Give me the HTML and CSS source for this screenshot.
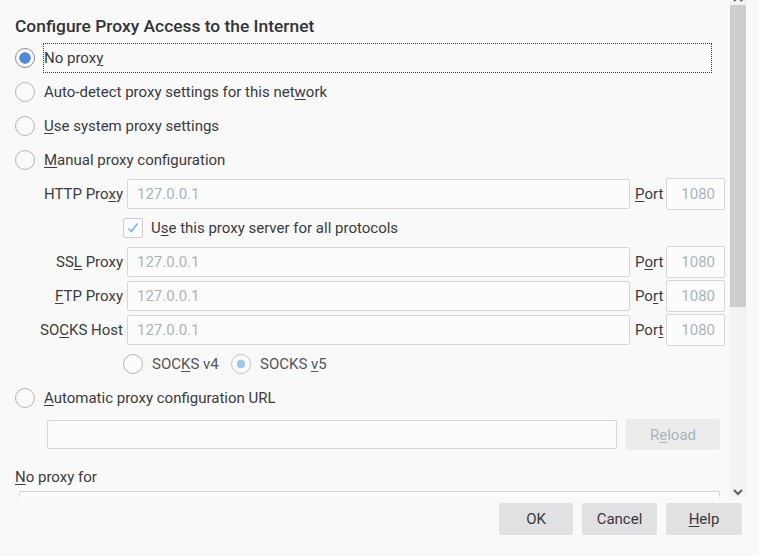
FILE: index.html
```html
<!DOCTYPE html>
<html lang="en">
<head>
    <meta charset="UTF-8">
    <meta name="viewport" content="width=device-width, initial-scale=1.0">
    <title>Connection Settings</title>
    <link rel="stylesheet" href="styles.css">
</head>
<body>
    <div class="dialog">
        <div class="scroll-area">
            <div class="content">
                <h1 class="title">Configure Proxy Access to the Internet</h1>

                <label class="option">
                    <input type="radio" name="mode" class="radio" checked>
                    <span class="option-text focused">No prox<u>y</u></span>
                </label>
                <label class="option">
                    <input type="radio" name="mode" class="radio">
                    <span class="option-text">Auto-detect proxy settings for this net<u>w</u>ork</span>
                </label>
                <label class="option">
                    <input type="radio" name="mode" class="radio">
                    <span class="option-text"><u>U</u>se system proxy settings</span>
                </label>
                <label class="option">
                    <input type="radio" name="mode" class="radio">
                    <span class="option-text"><u>M</u>anual proxy configuration</span>
                </label>

                <div class="proxy-grid">
                    <label class="field-label">HTTP Pro<u>x</u>y</label>
                    <input class="text-input" value="127.0.0.1" readonly>
                    <label class="port-label"><u>P</u>ort</label>
                    <input class="port-input" value="1080" readonly>

                    <label class="share-row">
                        <span class="checkbox">
                            <svg width="18" height="18" viewBox="0 0 18 18"><path d="M4.5 9.5 L7.5 12.5 L13.5 4.5" fill="none" stroke="#7db0e8" stroke-width="1.6"/></svg>
                        </span>
                        <span>U<u>s</u>e this proxy server for all protocols</span>
                    </label>

                    <label class="field-label">SS<u>L</u> Proxy</label>
                    <input class="text-input" value="127.0.0.1" readonly>
                    <label class="port-label">P<u>o</u>rt</label>
                    <input class="port-input" value="1080" readonly>

                    <label class="field-label"><u>F</u>TP Proxy</label>
                    <input class="text-input" value="127.0.0.1" readonly>
                    <label class="port-label">Po<u>r</u>t</label>
                    <input class="port-input" value="1080" readonly>

                    <label class="field-label">SO<u>C</u>KS Host</label>
                    <input class="text-input" value="127.0.0.1" readonly>
                    <label class="port-label">Por<u>t</u></label>
                    <input class="port-input" value="1080" readonly>
                </div>

                <div class="socks-versions">
                    <label class="socks-option v4">
                        <input type="radio" name="socks" class="radio">
                        <span>SOC<u>K</u>S v4</span>
                    </label>
                    <label class="socks-option">
                        <input type="radio" name="socks" class="radio dimmed" checked>
                        <span>SOCKS <u>v</u>5</span>
                    </label>
                </div>

                <label class="option">
                    <input type="radio" name="mode" class="radio">
                    <span class="option-text"><u>A</u>utomatic proxy configuration URL</span>
                </label>

                <div class="url-row">
                    <input class="url-input" readonly>
                    <button class="reload" disabled>R<u>e</u>load</button>
                </div>

                <label class="no-proxy-label"><u>N</u>o proxy for</label>
                <textarea class="no-proxy-list"></textarea>
            </div>

            <div class="scrollbar">
                <svg class="arrow up" width="16" height="10" viewBox="0 0 16 10"><path d="M4 6 L8 2 L12 6" fill="none" stroke="#5b5b66" stroke-width="2"/></svg>
                <div class="thumb"></div>
                <div class="track-rest"></div>
                <svg class="arrow" width="16" height="10" viewBox="0 0 16 10"><path d="M4 3 L8 7 L12 3" fill="none" stroke="#5b5b66" stroke-width="2"/></svg>
            </div>
        </div>

        <div class="footer">
            <button class="btn ok">OK</button>
            <button class="btn cancel">Cancel</button>
            <button class="btn help"><u>H</u>elp</button>
        </div>
    </div>
</body>
</html>
```

FILE: styles.css
```css
* {
    box-sizing: border-box;
    margin: 0;
    padding: 0;
}
body {
    font-family: Roboto, "Noto Sans", sans-serif;
    font-size: 15px;
    color: #3b3b40;
    background: #f9f9f9;
}
u {
    text-decoration-thickness: 1px;
    text-underline-offset: 2px;
}
.dialog {
    width: 759px;
    height: 556px;
    display: flex;
    flex-direction: column;
}
.scroll-area {
    height: 497px;
    display: flex;
    overflow: hidden;
}
.content {
    width: 730px;
    padding-left: 15px;
}
.title {
    font-size: 17.4px;
    font-weight: 500;
    line-height: 24px;
    padding-top: 14px;
    margin-bottom: 3px;
    color: #333337;
}

/* radio buttons */
.radio {
    appearance: none;
    width: 20px;
    height: 20px;
    border: 1px solid #b4b4b8;
    border-radius: 50%;
    background: #fbfbfb;
    flex-shrink: 0;
}
.radio:checked {
    border-color: #8f8f94;
    background: radial-gradient(circle, #4d8bd6 0 5.4px, #fbfbfb 6px);
}
.radio.dimmed:checked {
    border-color: #c4c4c8;
    background: radial-gradient(circle, #9fc6f0 0 4px, #fbfbfb 4.6px);
}
.option {
    height: 34px;
    display: flex;
    align-items: center;
    gap: 8px;
}
.option-text {
    flex: 1;
    margin-right: 18px;
    height: 30px;
    line-height: 28px;
    border: 1px dotted transparent;
}
.option-text.focused {
    border-color: #3b3b3b;
}

/* manual proxy fields */
.proxy-grid {
    display: grid;
    grid-template-columns: 83px 503px 28px 59px;
    grid-auto-rows: 34px;
    column-gap: 4px;
    align-items: center;
    padding-left: 25px;
}
.field-label {
    text-align: right;
    white-space: nowrap;
}
.port-label {
    padding-left: 1px;
}
.text-input,
.port-input,
.url-input {
    font: inherit;
    height: 30px;
    border: 1px solid #d6d6d9;
    border-radius: 2px;
    background: #fcfcfc;
    color: #a8b5bc;
    padding: 0 9px;
    outline: none;
}
.text-input {
    width: 503px;
}
.port-input {
    width: 59px;
    height: 32px;
    text-align: right;
}
.share-row {
    grid-column: 1 / -1;
    padding-left: 83px;
    display: flex;
    align-items: center;
    gap: 8px;
}
.checkbox {
    width: 20px;
    height: 20px;
    border: 1px solid #cfcfd2;
    border-radius: 2px;
    background: #fbfbfb;
    display: flex;
    align-items: center;
    justify-content: center;
}
.socks-versions {
    height: 34px;
    display: flex;
    align-items: center;
    padding-left: 108px;
}
.socks-option {
    display: flex;
    align-items: center;
    gap: 9px;
    color: #55555a;
}
.socks-option.v4 {
    width: 108px;
}

/* automatic configuration */
.url-row {
    height: 36px;
    display: flex;
    align-items: center;
    padding: 3px 0 0 32px;
}
.url-input {
    width: 570px;
    height: 29px;
}
.reload {
    font: inherit;
    width: 94px;
    height: 31px;
    margin-left: 9px;
    border: none;
    border-radius: 2px;
    background: #ececec;
    color: #a8b5bc;
}
.no-proxy-label {
    display: block;
    line-height: 20px;
    margin-top: 16px;
}
.no-proxy-list {
    display: block;
    width: 701px;
    height: 60px;
    margin: 4px 0 0 4px;
    border: 1px solid #d6d6d9;
    border-radius: 2px;
    background: #fcfcfc;
    resize: none;
}

/* scrollbar */
.scrollbar {
    width: 16px;
    display: flex;
    flex-direction: column;
    background: #f3f3f3;
}
.arrow {
    flex-shrink: 0;
    display: block;
}
.arrow.up {
    margin-top: -5px;
}
.thumb {
    height: 302px;
    background: #cdcdcd;
}
.track-rest {
    flex: 1;
}

/* dialog buttons */
.footer {
    display: flex;
    justify-content: flex-end;
    gap: 9px;
    padding: 6px 17px 0 0;
}
.btn {
    font: inherit;
    height: 32px;
    border: none;
    border-radius: 2px;
    background: #e1e1e3;
    color: #38383d;
}
.ok {
    width: 74px;
}
.cancel {
    width: 75px;
}
.help {
    width: 76px;
}
```
